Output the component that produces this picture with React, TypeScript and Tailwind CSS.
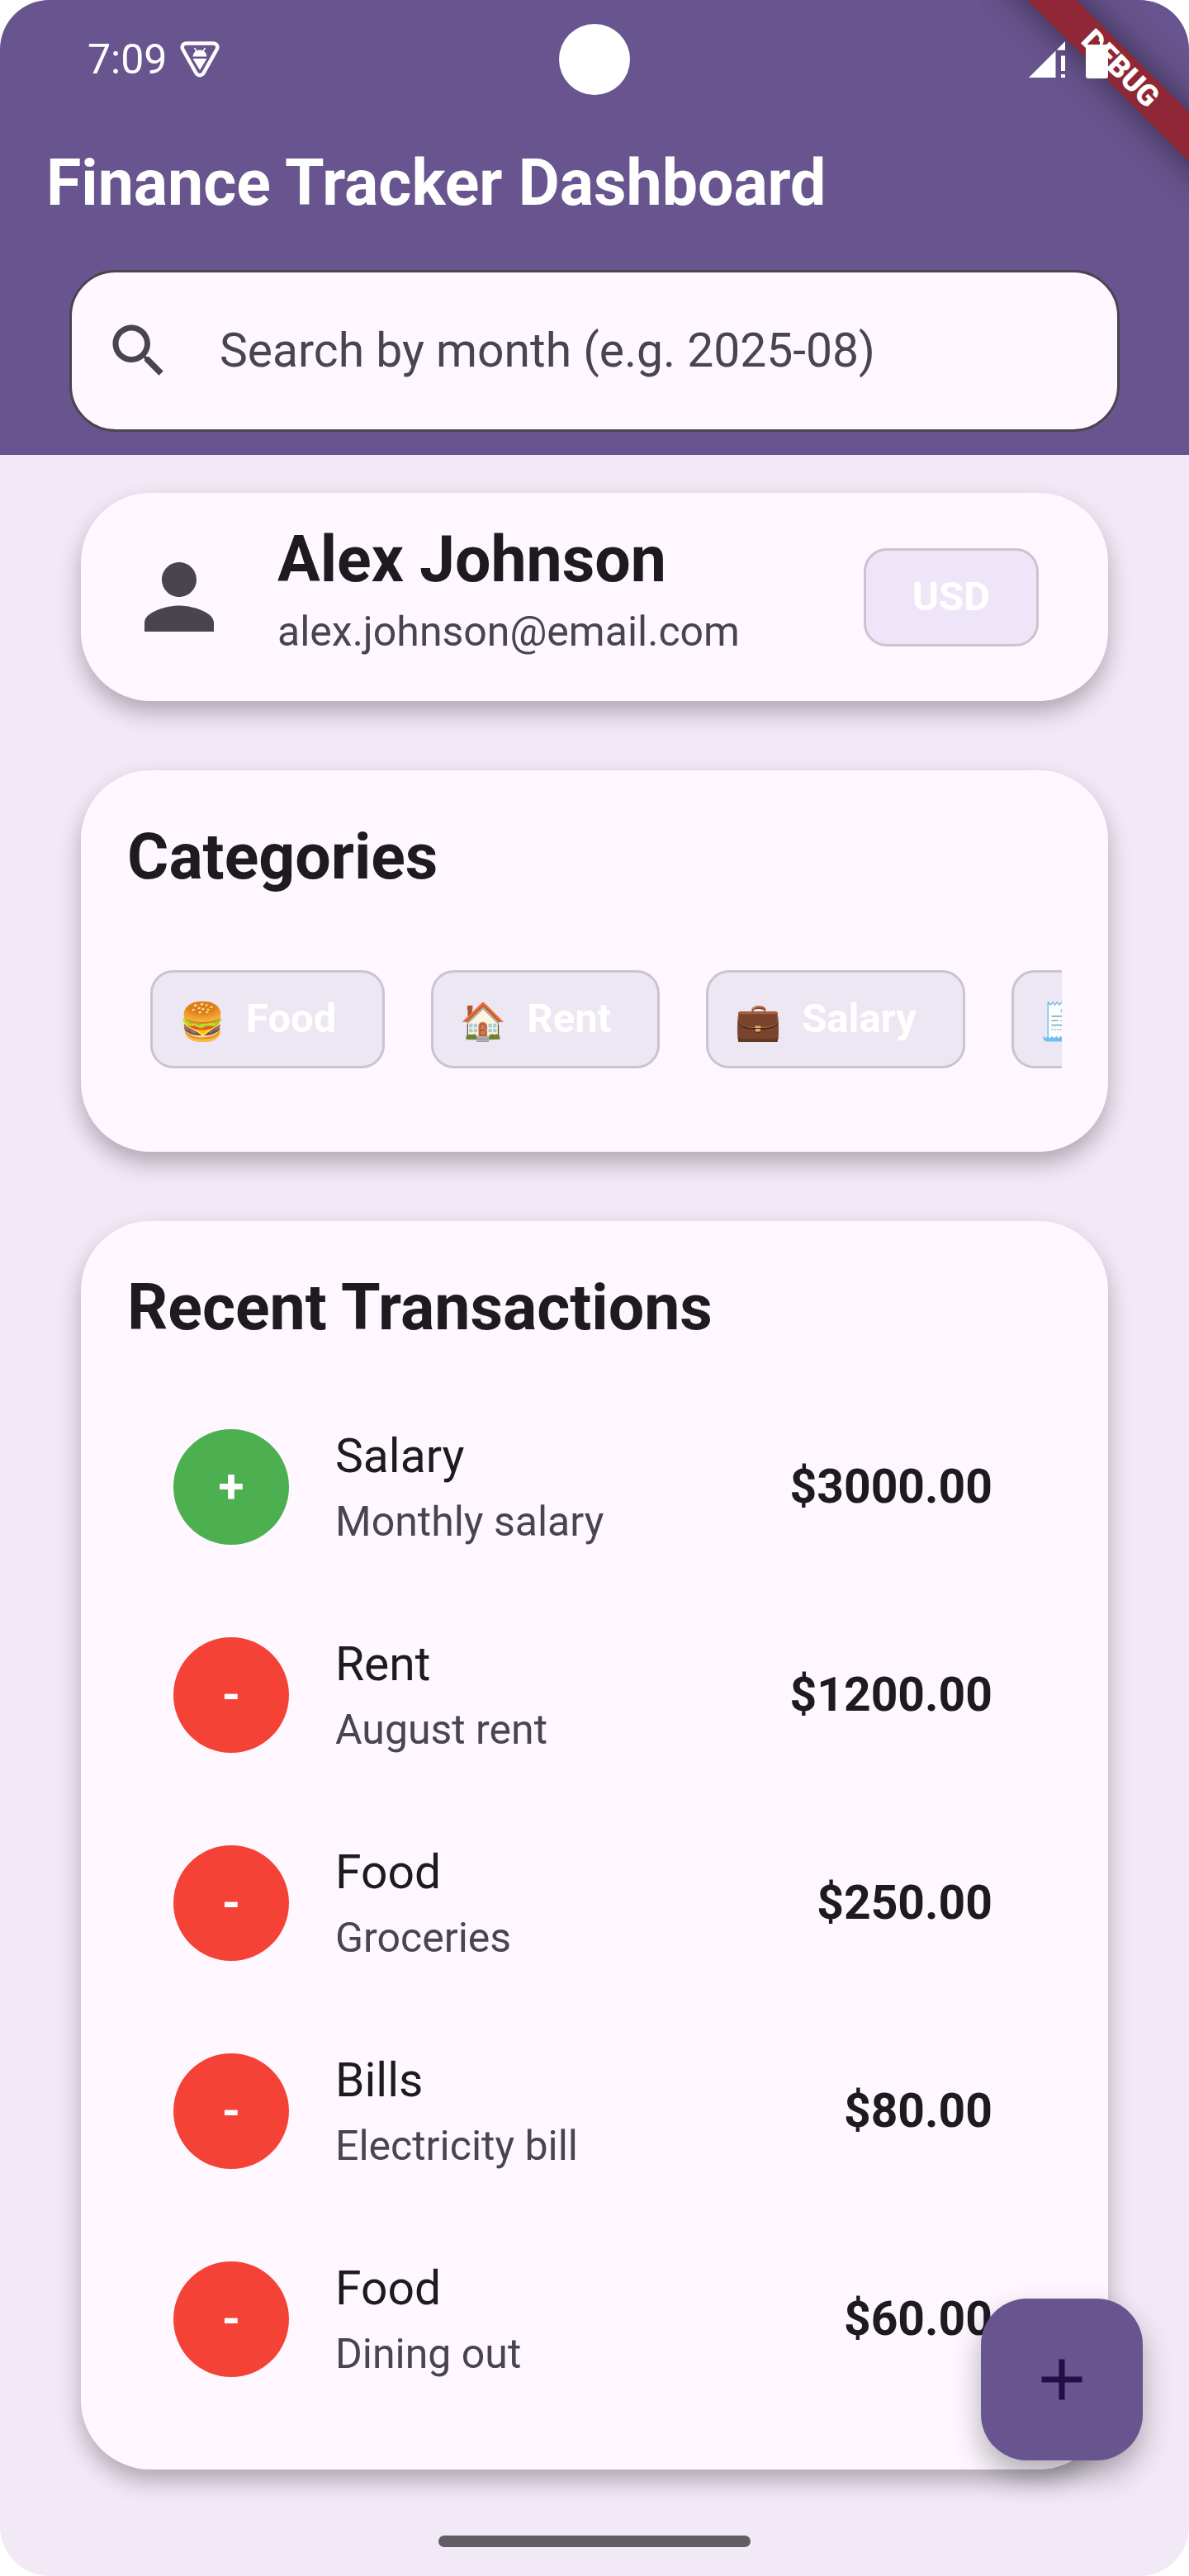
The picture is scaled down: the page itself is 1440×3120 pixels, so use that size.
import React from "react";

type Category = { icon: string; name: string };
type Transaction = { title: string; note: string; amount: string; income: boolean };

const categories: Category[] = [
  { icon: "🍔", name: "Food" },
  { icon: "🏠", name: "Rent" },
  { icon: "💼", name: "Salary" },
  { icon: "🧾", name: "Bills" },
];

const transactions: Transaction[] = [
  { title: "Salary", note: "Monthly salary", amount: "$3000.00", income: true },
  { title: "Rent", note: "August rent", amount: "$1200.00", income: false },
  { title: "Food", note: "Groceries", amount: "$250.00", income: false },
  { title: "Bills", note: "Electricity bill", amount: "$80.00", income: false },
  { title: "Food", note: "Dining out", amount: "$60.00", income: false },
];

const cardClass = "rounded-[84px] bg-[#fef7ff] shadow-[0_14px_28px_rgba(0,0,0,0.28)]";

function StatusBar() {
  return (
    <div className="flex h-36 items-center justify-between pl-[106px] pr-[98px] text-white">
      <div className="flex items-center gap-4">
        <span className="text-[50px] leading-[56px]">7:09</span>
        <svg viewBox="0 0 48 44" className="h-11 w-12" aria-hidden="true">
          <path
            d="M8 2.5h32c4.500 0 6.500 4 4.500 7.500L28.500 38.500c-2 3.500-7 3.500-9 0L3.500 10c-2-3.500 0-7.500 4.500-7.500z"
            fill="none"
            stroke="currentColor"
            strokeWidth="4.500"
          />
          <path d="M15.500 18.500a8.500 8 0 0 1 17 0zM15.500 21h17L24 35z" fill="currentColor" />
          <path d="M17.500 8l3 5M30.500 8l-3 5" stroke="currentColor" strokeWidth="1.500" />
        </svg>
      </div>
      <div className="z-20 flex items-center gap-[25px]">
        <svg viewBox="0 0 44 44" className="size-11" fill="currentColor" aria-hidden="true">
          <path d="M0 44L32.500 11.500V44zM44 0v10.800H33.500zM39 17.500h5V36h-5zM39 40h5v4h-5z" />
        </svg>
        <svg viewBox="0 0 27 46" className="h-[46px] w-[27px]" aria-hidden="true">
          <rect x="8" y="1" width="9" height="4" fill="#8f2736" />
          <rect x="0" y="5" width="27" height="41" rx="3" fill="currentColor" />
        </svg>
      </div>
    </div>
  );
}

function DebugBanner() {
  return (
    <div className="pointer-events-none absolute right-0 top-0 z-10 size-64 overflow-hidden" aria-hidden="true">
      <div className="absolute -right-[117px] top-[62px] flex h-[42px] w-[400px] rotate-45 items-center justify-center bg-[#8f2736] text-[36px] font-black leading-[42px] text-white shadow-[0_0_42px_rgba(0,0,0,0.5)]">
        DEBUG
      </div>
    </div>
  );
}

function Header() {
  return (
    <header className="bg-[#68548e] pb-7">
      <StatusBar />
      <h1 className="px-14 pb-[59px] pt-8 text-[77px] font-bold leading-[92px] text-white">
        Finance Tracker Dashboard
      </h1>
      <label className="mx-[84px] flex h-49 items-center gap-14 rounded-[56px] border-[3px] border-[#49454f] bg-[#fef7ff] pl-[39px] pr-14">
        <svg viewBox="0 0 24 24" className="size-21 shrink-0 fill-[#49454f]" aria-hidden="true">
          <path d="M15.500 14h-.790l-.280-.270C15.410 12.590 16 11.110 16 9.500 16 5.910 13.090 3 9.500 3S3 5.910 3 9.500 5.910 16 9.500 16c1.610 0 3.090-.590 4.230-1.570l.270.280v.790l5 4.990L20.490 19l-4.990-5zm-6 0C7.010 14 5 11.990 5 9.500S7.010 5 9.500 5 14 7.010 14 9.500 11.990 14 9.500 14z" />
        </svg>
        <input
          type="text"
          aria-label="Search by month"
          placeholder="Search by month (e.g. 2025-08)"
          className="min-w-0 flex-1 bg-transparent text-[57px] leading-[84px] text-[#1d1b20] outline-none placeholder:text-[#49454f] placeholder:opacity-100"
        />
      </label>
    </header>
  );
}

function ProfileCard() {
  return (
    <section className={`${cardClass} flex min-h-63 items-center pl-14 pr-[84px]`}>
      <svg viewBox="0 0 24 24" className="size-[126px] shrink-0 fill-[#49454f]" aria-hidden="true">
        <path d="M12 12c2.210 0 4-1.790 4-4s-1.790-4-4-4-4 1.790-4 4 1.790 4 4 4zm0 2c-2.670 0-8 1.340-8 4v2h16v-2c0-2.660-5.330-4-8-4z" />
      </svg>
      <div className="ml-14 min-w-0 flex-1">
        <h2 className="text-[77px] font-bold leading-[84px] text-[#1d1b20]">Alex Johnson</h2>
        <p className="text-[50px] leading-[90px] text-[#49454f]">alex.johnson@email.com</p>
      </div>
      <button
        type="button"
        className="h-[119px] rounded-[28px] border-[3px] border-[#cac4d0] bg-[#efe5f8] px-14 text-[49px] font-bold leading-[70px] text-white"
      >
        USD
      </button>
    </section>
  );
}

function CategoriesCard() {
  return (
    <section className={`${cardClass} p-14`}>
      <h2 className="text-[77px] font-bold leading-[98px] text-[#1d1b20]">Categories</h2>
      <div className="mt-[42px] flex h-[210px] items-center gap-14 overflow-x-auto pl-7 [scrollbar-width:none]">
        {categories.map((category) => (
          <button
            key={category.name}
            type="button"
            className="flex h-[119px] shrink-0 items-center rounded-[28px] border-[3px] border-[#cac4d0] bg-[#ede6f3] pl-7 pr-14 text-[49px] font-bold leading-[70px] text-white"
          >
            <span className="flex h-14 w-16 items-center justify-center overflow-hidden pt-2 font-['Noto_Color_Emoji'] text-[45px] font-normal">
              {category.icon}
            </span>
            <span className="ml-[21px]">{category.name}</span>
          </button>
        ))}
      </div>
    </section>
  );
}

function TransactionRow({ item }: { item: Transaction }) {
  return (
    <li className="flex min-h-63 items-center pl-14 pr-[84px]">
      <span
        className={`flex size-35 shrink-0 items-center justify-center rounded-full text-[57px] font-bold leading-[84px] text-white ${
          item.income ? "bg-[#4caf50]" : "bg-[#f44336]"
        }`}
      >
        {item.income ? "+" : "-"}
      </span>
      <div className="ml-14 min-w-0 flex-1">
        <h3 className="text-[57px] leading-[84px] text-[#1d1b20]">{item.title}</h3>
        <p className="text-[50px] leading-[74px] text-[#49454f]">{item.note}</p>
      </div>
      <span className="text-[57px] font-bold leading-[84px] text-[#1d1b20]">{item.amount}</span>
    </li>
  );
}

function TransactionsCard() {
  return (
    <section className={`${cardClass} p-14`}>
      <h2 className="text-[77px] font-bold leading-[98px] text-[#1d1b20]">Recent Transactions</h2>
      <ul className="mt-[42px]">
        {transactions.map((item) => (
          <TransactionRow key={item.amount} item={item} />
        ))}
      </ul>
    </section>
  );
}

export default function App() {
  return (
    <div className="bg-white font-[Roboto,sans-serif]">
      <div className="relative overflow-hidden rounded-[60px] bg-[#f2e9f7]">
        <Header />
        <div className="absolute left-1/2 top-[29px] size-[86px] -translate-x-1/2 rounded-full bg-white" />
        <DebugBanner />
        <main className="flex flex-col gap-21 px-[98px] pb-[80px] pt-[46px]">
          <ProfileCard />
          <CategoriesCard />
          <TransactionsCard />
        </main>
        <div className="flex h-[49px] justify-center">
          <div className="h-3.5 w-[378px] rounded-full bg-[#605d63]" />
        </div>
        <button
          type="button"
          aria-label="Add transaction"
          className="absolute bottom-[140px] right-14 flex size-49 items-center justify-center rounded-[56px] bg-[#68548e] shadow-[0_18px_36px_rgba(0,0,0,0.3)]"
        >
          <svg viewBox="0 0 24 24" className="size-21 fill-[#230f46]" aria-hidden="true">
            <path d="M19 13h-6v6h-2v-6H5v-2h6V5h2v6h6v2z" />
          </svg>
        </button>
      </div>
    </div>
  );
}
